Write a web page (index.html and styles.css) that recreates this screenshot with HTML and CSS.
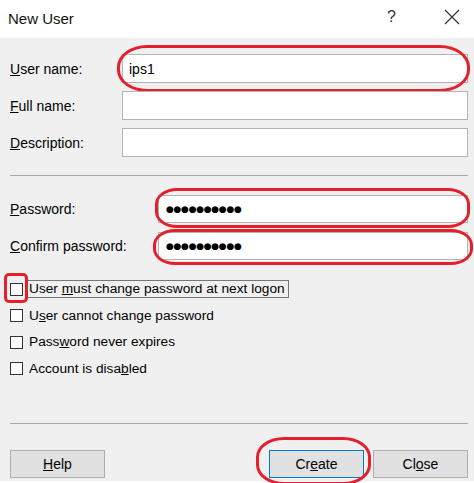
FILE: index.html
```html
<!DOCTYPE html>
<html>
<head>
<meta charset="utf-8">
<link rel="stylesheet" href="styles.css">
</head>
<body>
<div class="window">
  <div class="titlebar">
    <span class="title">New User</span>
    <span class="help-q">?</span>
    <svg class="close-x" width="16" height="16" viewBox="0 0 16 16"><path d="M1 1L15 15M15 1L1 15" stroke="#333" stroke-width="1.2" fill="none"/></svg>
  </div>
  <div class="body">
    <div class="row r-user">
      <label class="lbl"><u>U</u>ser name:</label>
      <div class="field wide"><span class="val">ips1</span>
        <div class="mark mark-user"></div>
      </div>
    </div>
    <div class="row">
      <label class="lbl"><u>F</u>ull name:</label>
      <div class="field wide"></div>
    </div>
    <div class="row">
      <label class="lbl"><u>D</u>escription:</label>
      <div class="field wide"></div>
    </div>
    <div class="sep sep1"></div>
    <div class="row r-pw">
      <label class="lbl"><u>P</u>assword:</label>
      <div class="field pw"><span class="dots">●●●●●●●●●●</span>
        <div class="mark mark-pw"></div>
      </div>
    </div>
    <div class="row r-pw2">
      <label class="lbl"><u>C</u>onfirm password:</label>
      <div class="field pw"><span class="dots">●●●●●●●●●●</span>
        <div class="mark mark-pw2"></div>
      </div>
    </div>
    <div class="checks">
      <div class="chk first"><span class="box"><span class="mark mark-box"></span></span><span class="ctext focus">User <u>m</u>ust change password at next logon</span></div>
      <div class="chk"><span class="box"></span><span class="ctext">U<u>s</u>er cannot change password</span></div>
      <div class="chk"><span class="box"></span><span class="ctext">Pass<u>w</u>ord never expires</span></div>
      <div class="chk"><span class="box"></span><span class="ctext">Account is disa<u>b</u>led</span></div>
    </div>
    <div class="sep sep2"></div>
    <div class="buttons">
      <button class="btn"><u>H</u>elp</button>
      <div class="spacer"></div>
      <button class="btn default">Cr<u>e</u>ate<span class="mark mark-create"></span></button>
      <button class="btn">Cl<u>o</u>se</button>
    </div>
  </div>
</div>
</body>
</html>
```

FILE: styles.css
```css
html, body {
  margin: 0;
  padding: 0;
  background: #ffffff;
}
body {
  font-family: "Liberation Sans", Arial, sans-serif;
  font-size: 14px;
  color: #000;
  width: 474px;
  height: 483px;
  overflow: hidden;
}
.window {
  width: 474px;
  height: 483px;
  display: flex;
  flex-direction: column;
}
.titlebar {
  height: 38px;
  flex: none;
  background: #fff;
  display: flex;
  align-items: center;
  padding: 0 0 0 8px;
  box-sizing: border-box;
}
.title {
  font-size: 15px;
  color: #111;
  flex: 1;
  margin-top: -2px;
}
.help-q {
  font-size: 16px;
  color: #333;
  margin-right: 48px;
  margin-top: -4px;
}
.close-x {
  margin-right: 14px;
  margin-top: -4px;
}
.body {
  background: #f0f0f0;
  height: 443px;
  flex: none;
  padding: 16px 6px 0 10px;
  box-sizing: border-box;
  display: flex;
  flex-direction: column;
}
.row {
  display: flex;
  align-items: center;
  height: 29px;
  flex: none;
  margin-bottom: 8px;
}
.lbl {
  width: 112px;
  flex: none;
}
.r-pw .lbl, .r-pw2 .lbl {
  width: 148px;
}
.field {
  position: relative;
  height: 29px;
  flex: 1;
  background: #fff;
  border: 1px solid #b4b4b4;
  box-sizing: border-box;
  display: flex;
  align-items: center;
  padding-left: 6px;
}
.val {
  font-size: 14px;
}
.r-pw { height: 28px; }
.r-pw .field { height: 28px; }
.r-pw2 { height: 28px; margin-top: 1px; }
.r-pw2 .field { height: 28px; }
.dots {
  font-family: "DejaVu Sans", sans-serif;
  font-size: 9px;
  letter-spacing: -0.3px;
  margin-left: 1px;
}
.sep {
  height: 1px;
  flex: none;
  background: #a8a8a8;
}
.sep1 {
  margin-top: 10px;
  margin-bottom: 19px;
}
.checks {
  margin-top: 13px;
  display: flex;
  flex-direction: column;
  flex: none;
}
.chk {
  display: flex;
  align-items: center;
  height: 16px;
  margin-bottom: 10.5px;
}
.box {
  position: relative;
  width: 11px;
  height: 11px;
  border: 1px solid #333;
  background: #fff;
  flex: none;
  margin-right: 6px;
}
.ctext {
  font-size: 13.7px;
  line-height: 16px;
  padding: 0 3px 0 1px;
  border: 1px solid transparent;
  margin-left: -2px;
}
.ctext.focus {
  border: 1px solid #777;
}
.sep2 {
  margin-top: 36px;
}
.buttons {
  display: flex;
  margin-top: 26px;
  height: 28px;
  flex: none;
}
.btn {
  position: relative;
  font-family: "Liberation Sans", Arial, sans-serif;
  font-size: 14px;
  width: 95px;
  height: 28px;
  background: #e1e1e1;
  border: 1px solid #adadad;
  color: #000;
  padding: 0;
}
.btn.default {
  border: 1px solid #0078d7;
  margin-right: 9px;
}
.spacer { flex: 1; }
.mark {
  position: absolute;
  border: 3.5px solid #e3202c;
  pointer-events: none;
}
.mark-user {
  left: -6px;
  right: -3px;
  top: -10px;
  bottom: -10px;
  border-radius: 30px / 22px;
}
.mark-pw {
  left: -4px;
  right: -3px;
  top: -8px;
  bottom: -6px;
  border-radius: 22px / 16px;
}
.mark-pw2 {
  left: -6px;
  right: -6px;
  top: -4px;
  bottom: -6px;
  border-radius: 22px / 16px;
}
.mark-box {
  left: -7px;
  top: -11px;
  width: 18px;
  height: 24px;
  border-radius: 5px;
}
.mark-create {
  left: -14px;
  right: -8px;
  top: -14px;
  bottom: -8px;
  border-radius: 28px / 20px;
}
```
